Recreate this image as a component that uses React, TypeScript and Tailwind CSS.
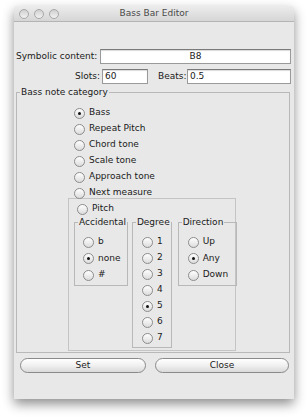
import React from 'react';

const Radio = ({ label, checked = false }: { label: string; checked?: boolean }) => (
  <div className="flex items-center h-[16px] gap-[4px] whitespace-nowrap">
    <span className="w-[11px] h-[11px] shrink-0 rounded-full border border-[#8c8c8c] bg-gradient-to-b from-[#ffffff] to-[#dcdcdc] flex items-center justify-center">
      {checked && <span className="w-[3px] h-[3px] rounded-full bg-[#111]" />}
    </span>
    <span>{label}</span>
  </div>
);

const TextBox = ({ value, className }: { value: string; className: string }) => (
  <div className={`h-[15px] shrink-0 bg-white border border-[#9a9a9a] border-t-[#7a7a7a] shadow-[inset_0_1px_1px_rgba(0,0,0,0.15)] leading-[13px] px-[2px] ${className}`}>
    {value}
  </div>
);

const Box = ({ title, className, children }: { title: string; className: string; children: React.ReactNode }) => (
  <fieldset className={`border border-[#b8b8b8] shrink-0 ${className}`}>
    <legend className="ml-[3px] px-[1px] leading-[11px] whitespace-nowrap">{title}</legend>
    {children}
  </fieldset>
);

const App: React.FC = () => {
  return (
    <div
      className="w-[308px] h-[420px] bg-white overflow-hidden pt-[6px] pl-[14px] text-[9px] text-[#1a1a1a]"
      style={{ fontFamily: '"DejaVu Sans", "Liberation Sans", sans-serif' }}
    >
      <div className="w-[280px] h-[393px] bg-[#e8e8e8] rounded-t-[4px] shadow-[0_5px_12px_rgba(0,0,0,0.45)] flex flex-col">
        {/* TITLE BAR */}
        <div className="h-[16px] rounded-t-[4px] bg-gradient-to-b from-[#ececec] to-[#d6d6d6] border-b border-[#b4b4b4] flex items-center relative">
          <div className="flex gap-[5px] pl-[5px]">
            <span className="w-[10px] h-[10px] rounded-full border border-[#a8a8a8] bg-gradient-to-b from-[#d0d0d0] to-[#f2f2f2]" />
            <span className="w-[10px] h-[10px] rounded-full border border-[#a8a8a8] bg-gradient-to-b from-[#d0d0d0] to-[#f2f2f2]" />
            <span className="w-[10px] h-[10px] rounded-full border border-[#a8a8a8] bg-gradient-to-b from-[#d0d0d0] to-[#f2f2f2]" />
          </div>
          <div className="absolute inset-0 flex items-center justify-center text-[#4a4a4a]">Bass Bar Editor</div>
        </div>

        <div className="pl-[2px] pr-[3px]">
          {/* SYMBOLIC CONTENT */}
          <div className="flex items-center mt-[27px]">
            <div className="w-[82px] text-right pr-[1px] whitespace-nowrap">Symbolic content:</div>
            <TextBox value="B8" className="ml-[2px] w-[191px] text-center" />
          </div>

          {/* SLOTS / BEATS */}
          <div className="flex items-center mt-[5px]">
            <div className="w-[84px] text-right">Slots:</div>
            <TextBox value="60" className="ml-[2px] w-[46px]" />
            <div className="ml-[10px] w-[27px]">Beats:</div>
            <TextBox value="0.5" className="ml-[2px] w-[104px]" />
          </div>

          {/* BASS NOTE CATEGORY */}
          <Box title="Bass note category" className="mt-[3px] w-[274px] h-[266px]">
            <div className="pl-[57px] pt-[7px]">
              <Radio label="Bass" checked />
              <Radio label="Repeat Pitch" />
              <Radio label="Chord tone" />
              <Radio label="Scale tone" />
              <Radio label="Approach tone" />
              <Radio label="Next measure" />
            </div>
            <div className="-mt-[3px] ml-[51px] w-[168px] h-[153px] border border-[#c4c4c4]">
              <div className="pl-[8px] pt-[2px]">
                <Radio label="Pitch" />
              </div>
              <div className="flex items-start pl-[5px]">
                <Box title="Accidental" className="w-[53px] h-[69px]">
                  <div className="pl-[8px] pt-[6px] flex flex-col gap-[0.5px]">
                    <Radio label="b" />
                    <Radio label="none" checked />
                    <Radio label="#" />
                  </div>
                </Box>
                <Box title="Degree" className="ml-[4px] w-[36px] h-[131px]">
                  <div className="pl-[9px] pt-[6px]">
                    <Radio label="1" />
                    <Radio label="2" />
                    <Radio label="3" />
                    <Radio label="4" />
                    <Radio label="5" checked />
                    <Radio label="6" />
                    <Radio label="7" />
                  </div>
                </Box>
                <Box title="Direction" className="ml-[6px] w-[59px] h-[69px]">
                  <div className="pl-[9px] pt-[6px] flex flex-col gap-[0.5px]">
                    <Radio label="Up" />
                    <Radio label="Any" checked />
                    <Radio label="Down" />
                  </div>
                </Box>
              </div>
            </div>
          </Box>

          {/* BUTTONS */}
          <div className="flex mt-[5px] pl-[4px] gap-[9px]">
            <button className="w-[126px] h-[15px] rounded-full border border-[#8a8a8a] bg-gradient-to-b from-[#ffffff] via-[#f0f0f0] to-[#dadada] leading-[13px] text-[#1a1a1a]">
              Set
            </button>
            <button className="w-[134px] h-[15px] rounded-full border border-[#8a8a8a] bg-gradient-to-b from-[#ffffff] via-[#f0f0f0] to-[#dadada] leading-[13px] text-[#1a1a1a]">
              Close
            </button>
          </div>
        </div>
      </div>
    </div>
  );
};

export default App;
